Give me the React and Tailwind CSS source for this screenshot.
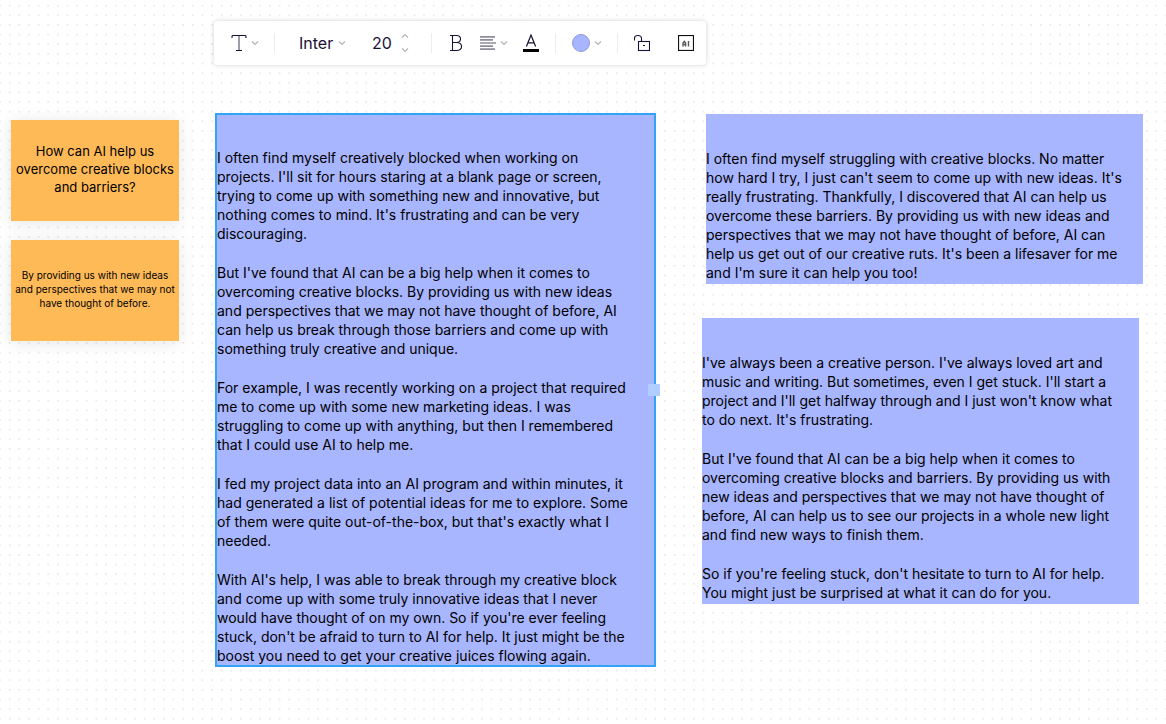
import { useState } from "react";

const questions = [
  {
    text: "How can AI help us overcome creative blocks and barriers?",
    size: "text-[13px] leading-[18px]",
  },
  {
    text: "By providing us with new ideas and perspectives that we may not have thought of before.",
    size: "text-[10px] leading-[14px]",
  },
];

const longAnswer = [
  `I often find myself creatively blocked when working on
projects. I'll sit for hours staring at a blank page or screen,
trying to come up with something new and innovative, but
nothing comes to mind. It's frustrating and can be very
discouraging.`,
  `But I've found that AI can be a big help when it comes to
overcoming creative blocks. By providing us with new ideas
and perspectives that we may not have thought of before, AI
can help us break through those barriers and come up with
something truly creative and unique.`,
  `For example, I was recently working on a project that required
me to come up with some new marketing ideas. I was
struggling to come up with anything, but then I remembered
that I could use AI to help me.`,
  `I fed my project data into an AI program and within minutes, it
had generated a list of potential ideas for me to explore. Some
of them were quite out-of-the-box, but that's exactly what I
needed.`,
  `With AI's help, I was able to break through my creative block
and come up with some truly innovative ideas that I never
would have thought of on my own. So if you're ever feeling
stuck, don't be afraid to turn to AI for help. It just might be the
boost you need to get your creative juices flowing again.`,
];

const shortAnswer = [
  `I often find myself struggling with creative blocks. No matter
how hard I try, I just can't seem to come up with new ideas. It's
really frustrating. Thankfully, I discovered that AI can help us
overcome these barriers. By providing us with new ideas and
perspectives that we may not have thought of before, AI can
help us get out of our creative ruts. It's been a lifesaver for me
and I'm sure it can help you too!`,
];

const storyAnswer = [
  `I've always been a creative person. I've always loved art and
music and writing. But sometimes, even I get stuck. I'll start a
project and I'll get halfway through and I just won't know what
to do next. It's frustrating.`,
  `But I've found that AI can be a big help when it comes to
overcoming creative blocks and barriers. By providing us with
new ideas and perspectives that we may not have thought of
before, AI can help us to see our projects in a whole new light
and find new ways to finish them.`,
  `So if you're feeling stuck, don't hesitate to turn to AI for help.
You might just be surprised at what it can do for you.`,
];

function Chevron({ up = false }) {
  return (
    <svg viewBox="0 0 8 6" className="h-[6px] w-2 shrink-0" fill="none" stroke="#b4b3bd" strokeWidth="1.2">
      <path d={up ? "M1 4.5 4 1.5 7 4.5" : "M1 1.5 4 4.5 7 1.5"} />
    </svg>
  );
}

function Divider() {
  return <div className="h-5 w-px shrink-0 bg-[#ededf0]" />;
}

/* Dot grid behind everything on the board */
function DotGrid() {
  return (
    <svg className="pointer-events-none absolute inset-0 h-full w-full" aria-hidden="true">
      <defs>
        <pattern id="dots" x="4.9" y="0.9" width="9.636" height="9.636" patternUnits="userSpaceOnUse">
          <circle cx="4.8" cy="4.8" r="0.6" fill="#c4c4c8" />
        </pattern>
      </defs>
      <rect width="100%" height="100%" fill="url(#dots)" />
    </svg>
  );
}

function Toolbar() {
  const [font, setFont] = useState("Inter");
  const [size, setSize] = useState(20);

  return (
    <div
      role="toolbar"
      aria-label="Text formatting"
      className="flex h-11 w-fit items-center rounded bg-white pr-3 pl-[17px] text-[#1a1038]
                 shadow-[0_0_5px_rgba(0,0,0,0.18)]"
    >
      <button aria-label="Text type" className="flex items-center gap-1">
        <svg viewBox="0 0 16 18" className="h-[18px] w-4" fill="none" stroke="currentColor">
          <path d="M1 4V2.4Q1 1.5 2 1.5H14Q15 1.5 15 2.4V4M5 16.5H11" strokeWidth="1.1" />
          <path d="M8 1.5V16.5" strokeWidth="1.4" opacity="0.6" />
        </svg>
        <Chevron />
      </button>

      <div className="mr-6 ml-[15px]"><Divider /></div>

      <label className="flex items-center gap-1">
        <select
          aria-label="Font"
          value={font}
          onChange={(e) => setFont(e.target.value)}
          className="w-[35px] appearance-none bg-transparent text-[16px] leading-5 outline-none"
        >
          <option>Inter</option>
          <option>Lato</option>
        </select>
        <Chevron />
      </label>

      <div className="ml-[26px] flex items-center gap-2">
        <input
          aria-label="Font size"
          value={size}
          onChange={(e) => setSize(Number(e.target.value) || 0)}
          className="w-[21px] bg-transparent text-[16px] leading-5 outline-none"
        />
        <div className="flex flex-col gap-2">
          <button aria-label="Increase size" className="flex" onClick={() => setSize(size + 1)}>
            <Chevron up />
          </button>
          <button aria-label="Decrease size" className="flex" onClick={() => setSize(size - 1)}>
            <Chevron />
          </button>
        </div>
      </div>

      <div className="mr-[18px] ml-[22px]"><Divider /></div>

      <button aria-label="Bold">
        <svg viewBox="0 0 12 18" className="h-[18px] w-3" fill="none" stroke="currentColor" strokeWidth="1.1">
          <path d="M0 1.5H6.5C9.3 1.5 10.5 3 10.5 5S9.3 8.5 6.5 8.5H2.5M6.5 8.5C10 8.5 11.5 10.2 11.5 12.5S10 16.5 6.5 16.5H0M2.5 1.5V16.5" />
        </svg>
      </button>

      <button aria-label="Align" className="ml-[18px] flex items-center gap-1">
        <svg viewBox="0 0 16 14" className="h-[14px] w-4" fill="none" stroke="#8f8c9c" strokeWidth="1.7">
          <path d="M0 .9H15M0 3.95H13M0 7H16M0 10.05H13M0 13.1H15" />
        </svg>
        <Chevron />
      </button>

      <button aria-label="Text color" className="mr-4 ml-[15px]">
        <svg viewBox="0 0 16 18" className="h-[18px] w-4" fill="none" stroke="currentColor">
          <path d="M3.4 12.5 8 1 12.6 12.5M5 8.8H11" strokeWidth="1.2" />
          <path d="M0 16.5H16" stroke="#000" strokeWidth="3" />
        </svg>
      </button>

      <Divider />

      <button aria-label="Fill color" className="mr-[15px] ml-4 flex items-center gap-1">
        <span className="h-[18px] w-[18px] rounded-full border border-[#8f9ae0] bg-[#a8b5ff]" />
        <Chevron />
      </button>

      <Divider />

      <button aria-label="Lock" className="ml-4">
        <svg viewBox="0 0 16 18" className="h-[18px] w-4" fill="none" stroke="currentColor" strokeWidth="1.1">
          <rect x="4.5" y="7.5" width="11" height="9" />
          <path d="M.5 6.5V4.5C.5 2.5 2 1.5 4 1.5S7.5 2.5 7.5 4.5V7.5M9 11.5H11" />
        </svg>
      </button>

      <button aria-label="AI assistant" className="ml-7">
        <svg viewBox="0 0 16 16" className="h-4 w-4" fill="none" stroke="#111">
          <rect x=".5" y=".5" width="15" height="15" strokeWidth="1.2" />
          <path d="M5 11.5V8L6.3 6.3 7.6 8V11.5M5 9.5H7.6M10.5 6V11.5" strokeWidth="1.4" opacity="0.7" />
        </svg>
      </button>
    </div>
  );
}

function Note({ text, size }) {
  return (
    <div className="flex h-[101px] items-center justify-center bg-[#ffba58] px-1 pb-1 shadow-[0_2px_16px_rgba(0,0,0,0.1)]">
      <p className={`text-center text-black ${size}`}>{text}</p>
    </div>
  );
}

function Answer({ paragraphs, selected = false }) {
  return (
    <article
      className={`relative text-[14px] leading-[19px] text-black bg-[#a8b5ff] ${
        selected ? "border-2 border-[#35a3f5] pt-[33px]" : "pt-[35px] pb-[2px]"
      }`}
    >
      <div className="flex flex-col gap-5">
        {paragraphs.map((p) => (
          <p key={p} className="whitespace-pre-line">{p}</p>
        ))}
      </div>
      {selected && (
        <div className="absolute top-1/2 -right-[6px] h-3 w-3 -translate-y-1/2 bg-[#b0ceff]" />
      )}
    </article>
  );
}

export default function App() {
  return (
    <main className="relative min-h-screen bg-white font-['Inter',sans-serif]">
      <DotGrid />
      <div className="relative pt-[21px]">
        <div className="ml-[214px]">
          <Toolbar />
        </div>

        <div className="mt-12 flex items-start pr-[23px] pl-[11px]">
          <section className="mt-[7px] flex flex-[168] flex-col gap-[19px]">
            {questions.map((q) => (
              <Note key={q.text} text={q.text} size={q.size} />
            ))}
          </section>

          <section className="ml-9 flex-[441]">
            <Answer paragraphs={longAnswer} selected />
          </section>

          <section className="mt-px ml-[46px] flex flex-[441] flex-col gap-[34px]">
            <div className="ml-1">
              <Answer paragraphs={shortAnswer} />
            </div>
            <div className="mr-1">
              <Answer paragraphs={storyAnswer} />
            </div>
          </section>
        </div>
      </div>
    </main>
  );
}
